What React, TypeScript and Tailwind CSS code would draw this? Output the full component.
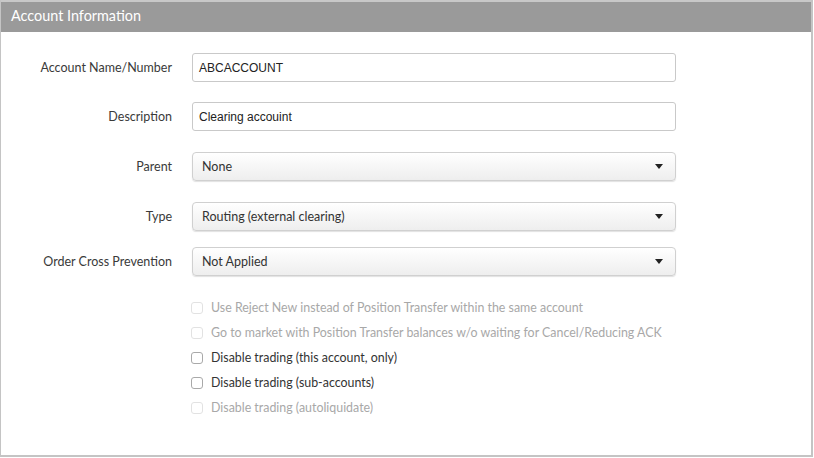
export default function App() {
  const fields = [
    { label: "Account Name/Number", value: "ABCACCOUNT", kind: "input", mt: "mt-[21px]" },
    { label: "Description", value: "Clearing accouint", kind: "input", mt: "mt-[20px]" },
    { label: "Parent", value: "None", kind: "select", mt: "mt-[21px]" },
    { label: "Type", value: "Routing (external clearing)", kind: "select", mt: "mt-[21px]" },
    { label: "Order Cross Prevention", value: "Not Applied", kind: "select", mt: "mt-[16px]" },
  ];

  const checks = [
    { label: "Use Reject New instead of Position Transfer within the same account", disabled: true },
    { label: "Go to market with Position Transfer balances w/o waiting for Cancel/Reducing ACK", disabled: true },
    { label: "Disable trading (this account, only)", disabled: false },
    { label: "Disable trading (sub-accounts)", disabled: false },
    { label: "Disable trading (autoliquidate)", disabled: true },
  ];

  return (
    <div className="w-[814px] h-[458px] bg-white font-['Lato','Liberation_Sans',sans-serif]">
      <div className="w-[813px] h-[457px] border-l border-r-2 border-b-2 border-[#c4c4c4] flex flex-col">
        <div className="h-[32px] bg-[#9a9a9a] border-t-2 border-[#c8c8c8] flex items-center pl-[10px] pb-[2px]">
          <span className="text-white text-[14.4px]">Account Information</span>
        </div>
        <div className="flex flex-col">
          {fields.map((f) => (
            <div key={f.label} className={`flex items-center h-[29px] ${f.mt}`}>
              <div className="w-[171px] pt-[2px] text-right text-[12.5px] text-[#3a3a3a]">{f.label}</div>
              {f.kind === "input" ? (
                <div className="ml-[20px] w-[484px] h-[29px] border border-[#c9c9c9] rounded-[3px] bg-white flex items-center pl-[6px] font-['Liberation_Sans',sans-serif] text-[12px] text-[#222]">
                  {f.value}
                </div>
              ) : (
                <div className="ml-[20px] w-[484px] h-[29px] border border-[#d0d0d0] rounded-[4px] bg-gradient-to-b from-white to-[#eeeeee] shadow-[0_1px_1px_rgba(0,0,0,0.12)] flex items-center justify-between pl-[9px] pr-[12px] text-[12.5px] text-[#333]">
                  <span className="pt-[2px]">{f.value}</span>
                  <svg width="8" height="5" viewBox="0 0 8 5">
                    <path d="M0 0 L8 0 L4 5 Z" fill="#222" />
                  </svg>
                </div>
              )}
            </div>
          ))}
        </div>
        <div className="flex flex-col pl-[190px] mt-[19px]">
          {checks.map((c) => (
            <div key={c.label} className="flex items-center h-[25px]">
              <div
                className={`w-[12px] h-[12px] rounded-[3px] border bg-white ${
                  c.disabled ? "border-[#e2e2e2]" : "border-[#a9a9a9]"
                }`}
              />
              <span className={`ml-[8px] pt-[1px] text-[12.4px] ${c.disabled ? "text-[#a8a8a8]" : "text-[#333]"}`}>
                {c.label}
              </span>
            </div>
          ))}
        </div>
      </div>
    </div>
  );
}
